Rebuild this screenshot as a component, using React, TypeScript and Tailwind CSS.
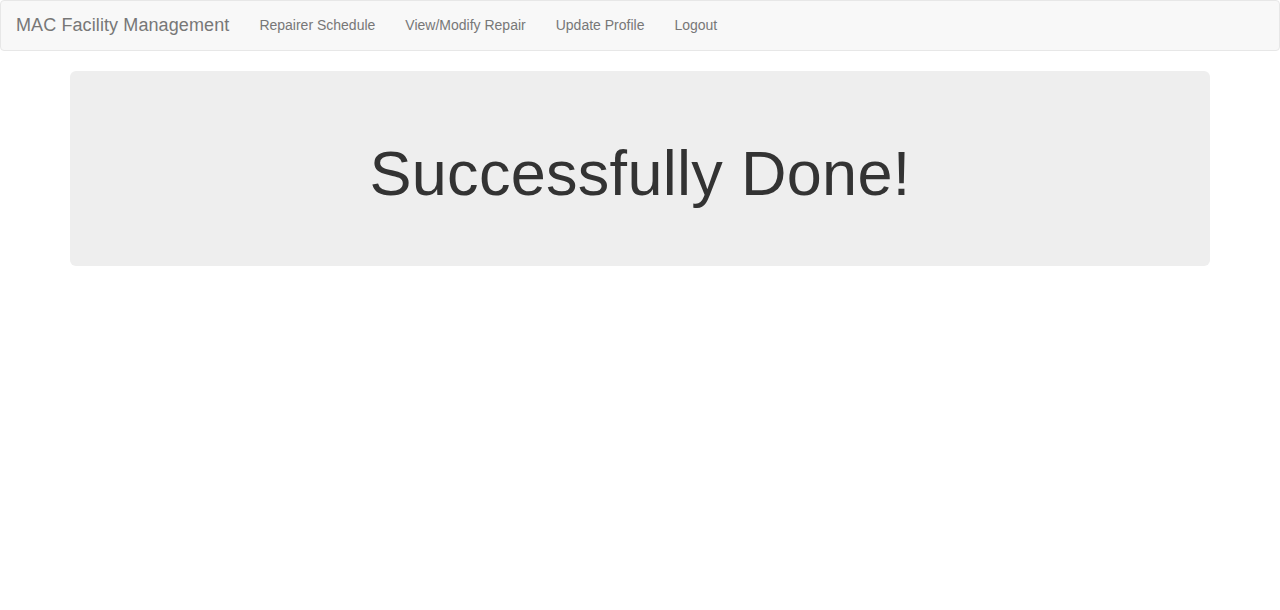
export default function App() {
  const links = ['Repairer Schedule', 'View/Modify Repair', 'Update Profile', 'Logout'];

  return (
    <div className="min-h-screen bg-white" style={{ fontFamily: '"Liberation Sans", Arial, sans-serif' }}>
      {/* Navbar */}
      <nav className="h-[51px] border border-[#e7e7e7] bg-[#f8f8f8] rounded-[4px] flex items-center pb-[1px]">
        <a className="px-[15px] text-[18px] leading-[20px] tracking-[0.1px] text-[#777777]">MAC Facility Management</a>
        <ul className="flex">
          {links.map(l => (
            <li key={l}>
              <a className="block px-[15px] text-[14px] leading-[20px] text-[#777777]">{l}</a>
            </li>
          ))}
        </ul>
      </nav>

      {/* Jumbotron */}
      <div className="w-[1170px] mx-auto px-[15px] mt-[20px]">
        <div className="bg-[#eeeeee] rounded-[6px] px-[60px] py-[48px]">
          <h1 className="mt-[20px] mb-[10px] text-[63px] leading-[69px] tracking-[0.3px] text-center text-[#333333] font-normal">
            Successfully Done!
          </h1>
        </div>
      </div>
    </div>
  );
}
